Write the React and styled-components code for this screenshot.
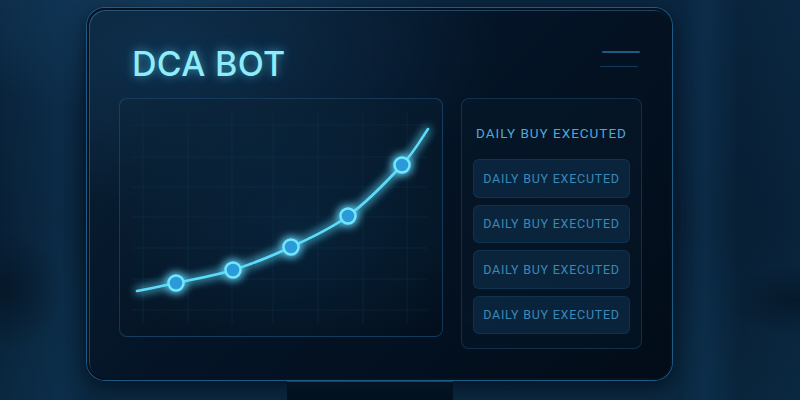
import React from "react";
import styled, { createGlobalStyle } from "styled-components";

const Global = createGlobalStyle`
  html, body { margin: 0; padding: 0; }
  body { width: 800px; height: 400px; overflow: hidden; background: #071d31; }
`;

const Scene = styled.div`
  width: 800px;
  height: 400px;
  overflow: hidden;
  display: flex;
  flex-direction: column;
  align-items: flex-start;
  padding: 8px 0 0 87px;
  box-sizing: border-box;
  background:
    radial-gradient(ellipse 60px 60px at 5px 290px, rgba(3,14,26,0.55), rgba(3,14,26,0) 100%),
    radial-gradient(ellipse 70px 35px at 795px 300px, rgba(3,14,26,0.5), rgba(3,14,26,0) 100%),
    linear-gradient(90deg, rgba(14,50,80,0.0) 0px, rgba(14,52,84,0.5) 60px, rgba(14,50,80,0) 90px, rgba(0,0,0,0) 680px, rgba(14,52,84,0.5) 705px, rgba(5,25,45,0.2) 740px, rgba(10,40,66,0.35) 800px),
    radial-gradient(ellipse 260px 120px at 170px 0px, rgba(30,80,120,0.5), rgba(30,80,120,0) 100%),
    linear-gradient(180deg, #0a2640 0%, #082036 55%, #0a2840 100%);
`;

const Monitor = styled.div`
  width: 585px;
  height: 374px;
  box-sizing: border-box;
  border-radius: 18px;
  border: 2px solid #051220;
  box-shadow:
    0 0 0 1px #1e5a86,
    inset 1px 1px 0 rgba(80,160,220,0.35),
    0 6px 18px rgba(0,6,14,0.6);
  background:
    radial-gradient(ellipse 320px 160px at 90px 40px, rgba(20,60,95,0.55), rgba(20,60,95,0) 100%),
    linear-gradient(135deg, #0a2136 0%, #041426 45%, #020c18 100%);
  padding: 0 28px 0 30px;
  display: flex;
  flex-direction: column;
`;

const Header = styled.div`
  height: 88px;
  display: flex;
  align-items: flex-start;
  justify-content: space-between;
`;

const Title = styled.h1`
  margin: 32px 0 0 13px;
  font-family: Inter, "Liberation Sans", sans-serif;
  font-weight: 500;
  font-size: 34px;
  line-height: 44px;
  letter-spacing: 0.3px;
  color: #90ecf8;
  text-shadow: 0 0 8px rgba(80, 210, 240, 0.55), 0 0 18px rgba(60, 180, 230, 0.3);
`;

const Menu = styled.div`
  margin-top: 41px;
  margin-right: 2px;
  display: flex;
  flex-direction: column;
  align-items: flex-end;
  gap: 13px;
`;

const MenuLine = styled.span`
  display: block;
  width: 38px;
  height: ${(p) => (p.$dim ? 1 : 2)}px;
  margin-right: ${(p) => (p.$dim ? 2 : 0)}px;
  border-radius: 1px;
  background: ${(p) => (p.$dim ? "#133a5a" : "#1f5a86")};
`;

const Body = styled.div`
  display: flex;
  align-items: flex-start;
  gap: 18px;
`;

const ChartPanel = styled.div`
  width: 324px;
  height: 239px;
  box-sizing: border-box;
  border-radius: 8px;
  border: 1px solid rgba(40, 100, 150, 0.45);
  background: linear-gradient(160deg, rgba(12,38,60,0.55), rgba(3,14,26,0.6));
  overflow: hidden;
`;

const ChartSvg = styled.svg`
  display: block;
`;

const SidePanel = styled.div`
  width: 181px;
  height: 251px;
  box-sizing: border-box;
  border-radius: 8px;
  border: 1px solid rgba(40, 100, 150, 0.35);
  background: linear-gradient(180deg, rgba(6,24,42,0.6), rgba(5,22,38,0.7));
  padding: 0 11px;
  display: flex;
  flex-direction: column;
  gap: 7px;
`;

const SideTitle = styled.div`
  height: 53px;
  display: flex;
  align-items: center;
  justify-content: center;
  padding-top: 14px;
  box-sizing: border-box;
  font-family: Roboto, "Liberation Sans", sans-serif;
  font-size: 13.5px;
  letter-spacing: 1px;
  color: #4ea9d8;
  white-space: nowrap;
`;

const Item = styled.div`
  height: 38.5px;
  box-sizing: border-box;
  border-radius: 6px;
  border: 1px solid rgba(40, 100, 150, 0.22);
  background: rgba(16, 52, 84, 0.5);
  display: flex;
  align-items: center;
  justify-content: center;
  font-family: Roboto, "Liberation Sans", sans-serif;
  font-size: 12.5px;
  letter-spacing: 0.75px;
  color: #3c88b6;
  white-space: nowrap;
`;

const Stand = styled.div`
  width: 166px;
  height: 18px;
  margin: 1px 0 0 200px;
  border-top: 1px solid #14436a;
  background: linear-gradient(180deg, #041423, #03101d);
`;

const pts = [
  [18, 193],
  [57, 185],
  [114, 172],
  [172, 149],
  [229, 118],
  [283, 67],
  [309, 31],
];

function smoothPath(p) {
  let d = `M${p[0][0]},${p[0][1]}`;
  for (let i = 0; i < p.length - 1; i++) {
    const p0 = p[i - 1] || p[i];
    const p1 = p[i];
    const p2 = p[i + 1];
    const p3 = p[i + 2] || p2;
    const c1x = p1[0] + (p2[0] - p0[0]) / 6;
    const c1y = p1[1] + (p2[1] - p0[1]) / 6;
    const c2x = p2[0] - (p3[0] - p1[0]) / 6;
    const c2y = p2[1] - (p3[1] - p1[1]) / 6;
    d += ` C${c1x.toFixed(1)},${c1y.toFixed(1)} ${c2x.toFixed(1)},${c2y.toFixed(1)} ${p2[0]},${p2[1]}`;
  }
  return d;
}

const vGrid = [24, 69, 113, 154, 199, 244, 288];
const hGrid = [27, 59, 89, 119, 150, 181, 212];

function Chart() {
  const d = smoothPath(pts);
  return (
    <ChartSvg width="322" height="237" viewBox="1 1 322 237">
      <defs>
        <filter id="glow" x="-20%" y="-20%" width="140%" height="140%">
          <feGaussianBlur stdDeviation="5" result="b" />
          <feMerge>
            <feMergeNode in="b" />
            <feMergeNode in="b" />
            <feMergeNode in="SourceGraphic" />
          </feMerge>
        </filter>
        <radialGradient id="halo" cx="0.55" cy="0.55" r="0.6">
          <stop offset="0" stopColor="#0e3a5c" stopOpacity="0.35" />
          <stop offset="1" stopColor="#0e3a5c" stopOpacity="0" />
        </radialGradient>
      </defs>
      <rect x="0" y="0" width="324" height="239" fill="url(#halo)" />
      {vGrid.map((x) => (
        <line key={"v" + x} x1={x} y1="14" x2={x} y2="226" stroke="#12395a" strokeOpacity="0.35" strokeWidth="1" />
      ))}
      {hGrid.map((y) => (
        <line key={"h" + y} x1="13" y1={y} x2="308" y2={y} stroke="#12395a" strokeOpacity="0.35" strokeWidth="1" />
      ))}
      <g filter="url(#glow)">
        <path d={d} fill="none" stroke="#5cdcfa" strokeWidth="2.6" strokeLinecap="round" />
        {pts.slice(1, 6).map(([x, y]) => (
          <circle key={x} cx={x} cy={y} r="7.5" fill="#2a9ad8" stroke="#72e6fc" strokeWidth="2.5" />
        ))}
      </g>
    </ChartSvg>
  );
}

export default function App() {
  return (
    <>
      <Global />
      <Scene>
        <Monitor>
          <Header>
            <Title>DCA BOT</Title>
            <Menu>
              <MenuLine />
              <MenuLine $dim />
            </Menu>
          </Header>
          <Body>
            <ChartPanel>
              <Chart />
            </ChartPanel>
            <SidePanel>
              <SideTitle>DAILY BUY EXECUTED</SideTitle>
              {[0, 1, 2, 3].map((i) => (
                <Item key={i}>DAILY BUY EXECUTED</Item>
              ))}
            </SidePanel>
          </Body>
        </Monitor>
        <Stand />
      </Scene>
    </>
  );
}
